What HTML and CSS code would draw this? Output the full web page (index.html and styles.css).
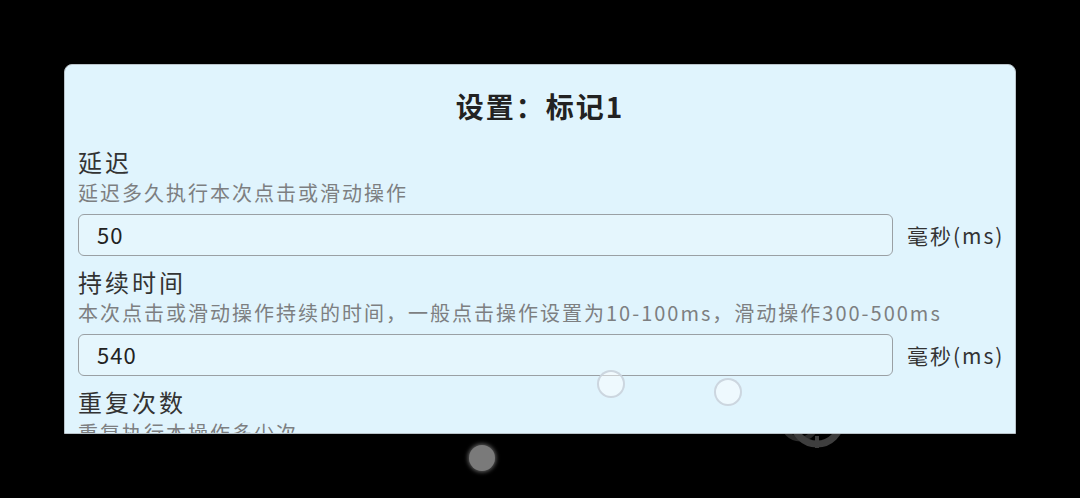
FILE: index.html
```html
<!DOCTYPE html>
<html lang="zh-CN">
<head>
<meta charset="utf-8">
<title>设置</title>
<link rel="stylesheet" href="styles.css">
</head>
<body>
<div class="screen">
  <svg class="crosshair" width="90" height="60" viewBox="0 0 90 60">
    <circle cx="30" cy="28" r="17" fill="none" stroke="#2a2a2a" stroke-width="5"/>
    <circle cx="47" cy="26" r="24" fill="none" stroke="#3e3e3e" stroke-width="7"/>
    <line x1="47" y1="42" x2="47" y2="54" stroke="#3e3e3e" stroke-width="4"/>
  </svg>
  <div class="card">
    <h1 class="title">设置：标记1</h1>
    <div class="field">
      <div class="label">延迟</div>
      <div class="desc">延迟多久执行本次点击或滑动操作</div>
      <div class="row">
        <div class="input">50</div>
        <span class="unit">毫秒(ms)</span>
      </div>
    </div>
    <div class="field">
      <div class="label">持续时间</div>
      <div class="desc">本次点击或滑动操作持续的时间，一般点击操作设置为10-100ms，滑动操作300-500ms</div>
      <div class="row">
        <div class="input">540</div>
        <span class="unit">毫秒(ms)</span>
      </div>
    </div>
    <div class="field">
      <div class="label">重复次数</div>
      <div class="desc">重复执行本操作多少次</div>
    </div>
  </div>
  <span class="marker marker-a"></span>
  <span class="marker marker-b"></span>
  <span class="dot"></span>
</div>
</body>
</html>
```

FILE: styles.css
```css
html, body {
  margin: 0;
  padding: 0;
  background: #000;
  width: 1080px;
  height: 498px;
  overflow: hidden;
  font-family: "Noto Sans CJK SC", "Noto Sans", sans-serif;
}

.screen {
  position: relative;
  width: 1080px;
  height: 498px;
  padding: 64px 0 0 64px;
  box-sizing: border-box;
}

.card {
  position: relative;
  z-index: 2;
  width: 952px;
  height: 370px;
  box-sizing: border-box;
  overflow: hidden;
  background: #e0f4fd;
  border: 1px solid #b9c3c9;
  border-radius: 8px 8px 0 0;
  padding: 21px 13px 0 13px;
}

.title {
  margin: 0 0 21px 0;
  text-align: center;
  font-size: 28px;
  line-height: 40px;
  font-weight: 700;
  letter-spacing: 2px;
  color: #222;
}

.field {
  margin-bottom: 11px;
}

.label {
  font-size: 24px;
  line-height: 30px;
  letter-spacing: 3px;
  color: #333;
}

.desc {
  font-size: 20px;
  line-height: 32px;
  letter-spacing: 2px;
  color: #7d7f81;
  white-space: nowrap;
}

.row {
  display: flex;
  align-items: center;
  gap: 14px;
  margin-top: 5px;
}

.input {
  flex: 1;
  height: 42px;
  box-sizing: border-box;
  border: 1.5px solid #9aa0a4;
  border-radius: 6px;
  background: #e5f6fd;
  padding-left: 18px;
  font-size: 22px;
  line-height: 39px;
  letter-spacing: 1px;
  color: #222;
}

.unit {
  width: 95px;
  font-size: 21px;
  letter-spacing: 2px;
  color: #333;
  white-space: nowrap;
}

.marker {
  position: absolute;
  z-index: 3;
  width: 28px;
  height: 28px;
  border-radius: 50%;
  box-sizing: border-box;
  border: 2px solid rgba(200, 210, 220, 0.9);
  background: rgba(255, 255, 255, 0.45);
}

.marker-a { left: 597px; top: 370px; }
.marker-b { left: 714px; top: 378px; }

.dot {
  position: absolute;
  z-index: 1;
  left: 469px;
  top: 445px;
  width: 26px;
  height: 26px;
  border-radius: 50%;
  background: #7a7a7a;
  box-shadow: 0 0 4px 1px rgba(170, 170, 170, 0.6);
}

.crosshair {
  position: absolute;
  z-index: 1;
  left: 770px;
  top: 394px;
}
```
